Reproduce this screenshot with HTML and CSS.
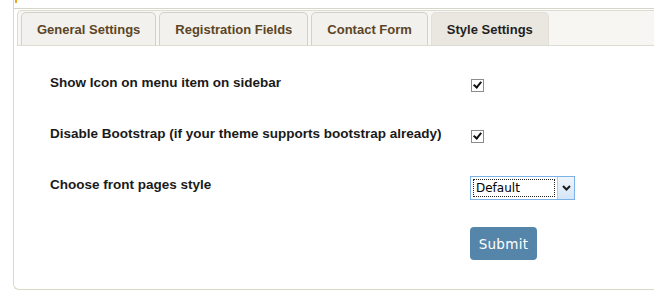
FILE: index.html
```html
<!DOCTYPE html>
<html lang="en">
<head>
    <meta charset="UTF-8">
    <title>Style Settings</title>
    <link rel="stylesheet" href="styles.css">
</head>
<body>
    <div class="panel">
        <div class="accent"></div>
        <div class="topline"></div>

        <div class="tabs">
            <ul class="tab-nav">
                <li class="tab">General Settings</li>
                <li class="tab">Registration Fields</li>
                <li class="tab">Contact Form</li>
                <li class="tab active">Style Settings</li>
            </ul>
        </div>

        <form class="settings">
            <div class="row">
                <label class="label" for="showIcon">Show Icon on menu item on sidebar</label>
                <input type="checkbox" id="showIcon" class="check" checked>
            </div>
            <div class="row">
                <label class="label" for="noBootstrap">Disable Bootstrap (if your theme supports bootstrap already)</label>
                <input type="checkbox" id="noBootstrap" class="check" checked>
            </div>
            <div class="row">
                <label class="label" for="frontStyle">Choose front pages style</label>
                <div class="select-box">
                    <select id="frontStyle" class="select">
                        <option>Default</option>
                        <option>Flat</option>
                    </select>
                    <span class="select-arrow">
                        <svg width="9" height="6" viewBox="0 0 9 6"><path d="M1 1 L4.5 4.5 L8 1" fill="none" stroke="#1a1a1a" stroke-width="2"/></svg>
                    </span>
                </div>
            </div>
            <div class="row">
                <span></span>
                <button type="button" class="submit-btn">Submit</button>
            </div>
        </form>
    </div>
</body>
</html>
```

FILE: styles.css
```css
* { box-sizing: border-box; margin: 0; padding: 0; }
body {
    font-family: "Liberation Sans", Arial, sans-serif;
    background: #fff;
    color: #222;
}
.panel {
    margin-left: 13px;
    height: 290px;
    border-left: 1px solid #d9d9c7;
    border-bottom: 1px solid #d9d9c7;
    border-bottom-left-radius: 6px;
}
.accent {
    width: 2px;
    height: 3px;
    margin-left: 1px;
    background: #f3a21c;
}
.topline {
    margin-top: 5px;
    border-top: 1px solid #d6d6c8;
}
.tabs {
    margin: 1px 0 0 3px;
}
.tab-nav {
    list-style: none;
    display: flex;
    gap: 3px;
    padding: 1px 0 0 3px;
    background: #f7f6f3;
    border: 1px solid #dcdcd2;
    border-right: none;
    border-radius: 5px 0 0 0;
}
.tab {
    height: 33px;
    padding: 0 15px;
    display: flex;
    align-items: center;
    font-size: 13px;
    font-weight: bold;
    color: #5c4526;
    background: #f2f1ed;
    border: 1px solid #d3d1c6;
    border-bottom: none;
    border-radius: 5px 5px 0 0;
}
.tab.active {
    color: #1f1f1f;
    background: #e9e7df;
    border-color: #e2e0d8;
}
.settings {
    padding: 28px 0 0 36px;
}
.row {
    display: grid;
    grid-template-columns: 420px auto;
    align-items: start;
    height: 51px;
}
.label {
    font-size: 13.5px;
    font-weight: bold;
    line-height: 16px;
    padding-top: 1px;
    color: #1a1a1a;
}
.check {
    appearance: none;
    width: 13px;
    height: 13px;
    margin: 5px 0 0 1px;
    border: 1px solid #8c8c8c;
    background: #fff;
    position: relative;
}
.check:checked::after {
    content: "";
    position: absolute;
    left: 3px;
    top: 0px;
    width: 3px;
    height: 6px;
    border: solid #111;
    border-width: 0 2px 2px 0;
    transform: rotate(40deg);
}
.select-box {
    display: flex;
    width: 105px;
    height: 24px;
    border: 1px solid #7db2e6;
    background: #fff;
}
.select {
    appearance: none;
    flex: 1;
    margin: 2px;
    padding-left: 2px;
    border: 1px dotted #222;
    background: #fff;
    font-family: "DejaVu Sans", Tahoma, sans-serif;
    font-size: 12px;
    color: #000;
    outline: none;
}
.select-arrow {
    width: 17px;
    display: flex;
    align-items: center;
    justify-content: center;
    background: linear-gradient(#eef5fc, #d4e6f7);
    border-left: 1px solid #a9cbed;
}
.submit-btn {
    width: 67px;
    height: 33px;
    background: #5585a9;
    color: #fff;
    border: none;
    border-radius: 4px;
    font-family: "DejaVu Sans", sans-serif;
    font-size: 13.5px;
    letter-spacing: 0.3px;
}
```
